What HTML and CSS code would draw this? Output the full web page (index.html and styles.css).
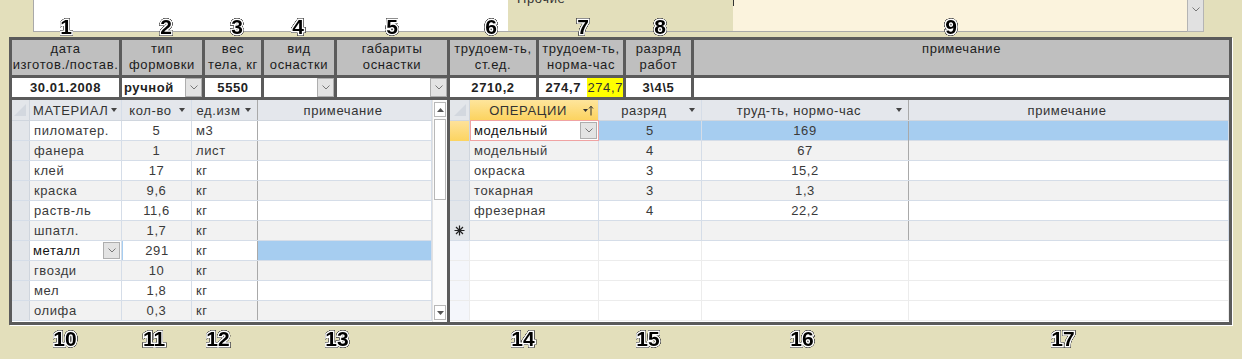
FILE: index.html
```html
<!DOCTYPE html>
<html lang="ru">
<head>
  <meta charset="UTF-8" />
  <title>Изделие: материалы и операции</title>
  <link rel="stylesheet" href="styles.css">
</head>
<body>

  <!-- Top controls (cut off) -->
  <div class="strip">
    <div class="strip-pad"></div>
    <div class="box-white"></div>
    <div class="box-khaki"><span class="cut-label">Прочие</span></div>
    <div class="box-cream"><span class="caret"></span></div>
    <div class="combo-btn">
      <svg width="8" height="5" viewBox="0 0 8 5"><path d="M0.5 0.5 L4 4 L7.5 0.5" fill="none" stroke="#777"/></svg>
    </div>
  </div>

  <div class="frame">

    <!-- Product header -->
    <div class="head-table">
      <div class="hcell">дата<br>изготов./постав.</div>
      <div class="hcell">тип<br>формовки</div>
      <div class="hcell">вес<br>тела, кг</div>
      <div class="hcell">вид<br>оснастки</div>
      <div class="hcell">габариты<br>оснастки</div>
      <div class="hcell">трудоем-ть,<br>ст.ед.</div>
      <div class="hcell">трудоем-ть,<br>норма-час</div>
      <div class="hcell">разряд<br>работ</div>
      <div class="hcell">примечание</div>

      <div class="dcell">30.01.2008</div>
      <div class="dcell combo">
        <span class="combo-text">ручной</span>
        <span class="drop tall"><svg width="8" height="5" viewBox="0 0 8 5"><path d="M0.5 0.5 L4 4 L7.5 0.5" fill="none" stroke="#777"/></svg></span>
      </div>
      <div class="dcell">5550</div>
      <div class="dcell combo">
        <span class="combo-text"></span>
        <span class="drop tall"><svg width="8" height="5" viewBox="0 0 8 5"><path d="M0.5 0.5 L4 4 L7.5 0.5" fill="none" stroke="#777"/></svg></span>
      </div>
      <div class="dcell combo">
        <span class="combo-text"></span>
        <span class="drop tall"><svg width="8" height="5" viewBox="0 0 8 5"><path d="M0.5 0.5 L4 4 L7.5 0.5" fill="none" stroke="#777"/></svg></span>
      </div>
      <div class="dcell">2710,2</div>
      <div class="dcell split">
        <span class="split-main">274,7</span>
        <span class="split-mark">274,7</span>
      </div>
      <div class="dcell">3\4\5</div>
      <div class="dcell"></div>
    </div>

    <!-- Subforms -->
    <div class="subforms">

      <!-- Materials -->
      <div class="sub mat">
        <div class="rows">
          <div class="row head">
            <div class="c sel corner"><svg width="14" height="14" viewBox="0 0 14 14"><polygon points="1,13 13,1 13,13" fill="#d3d8df"/></svg></div>
            <div class="c hc"><span class="ht">МАТЕРИАЛ</span><i class="arr"></i></div>
            <div class="c hc"><span class="ht">кол-во</span><i class="arr"></i></div>
            <div class="c hc sep"><span class="ht">ед.изм</span><i class="arr"></i></div>
            <div class="c hc"><span class="ht">примечание</span></div>
          </div>
          <div class="row">
            <div class="c sel"></div><div class="c">пиломатер.</div><div class="c mid">5</div><div class="c sep">м3</div><div class="c"></div>
          </div>
          <div class="row alt">
            <div class="c sel"></div><div class="c">фанера</div><div class="c mid">1</div><div class="c sep">лист</div><div class="c"></div>
          </div>
          <div class="row">
            <div class="c sel"></div><div class="c">клей</div><div class="c mid">17</div><div class="c sep">кг</div><div class="c"></div>
          </div>
          <div class="row alt">
            <div class="c sel"></div><div class="c">краска</div><div class="c mid">9,6</div><div class="c sep">кг</div><div class="c"></div>
          </div>
          <div class="row">
            <div class="c sel"></div><div class="c">раств-ль</div><div class="c mid">11,6</div><div class="c sep">кг</div><div class="c"></div>
          </div>
          <div class="row alt">
            <div class="c sel"></div><div class="c">шпатл.</div><div class="c mid">1,7</div><div class="c sep">кг</div><div class="c"></div>
          </div>
          <div class="row current">
            <div class="c sel"></div>
            <div class="c combo-cell">
              <span class="combo-text dark">металл</span>
              <span class="drop"><svg width="8" height="5" viewBox="0 0 8 5"><path d="M0.5 0.5 L4 4 L7.5 0.5" fill="none" stroke="#777"/></svg></span>
            </div>
            <div class="c mid edge">291</div><div class="c sep">кг</div><div class="c picked"></div>
          </div>
          <div class="row alt">
            <div class="c sel"></div><div class="c">гвозди</div><div class="c mid">10</div><div class="c sep">кг</div><div class="c"></div>
          </div>
          <div class="row">
            <div class="c sel"></div><div class="c">мел</div><div class="c mid">1,8</div><div class="c sep">кг</div><div class="c"></div>
          </div>
          <div class="row alt">
            <div class="c sel"></div><div class="c">олифа</div><div class="c mid">0,3</div><div class="c sep">кг</div><div class="c"></div>
          </div>
        </div>

        <div class="scroll">
          <div class="sb-btn"><svg width="7" height="4" viewBox="0 0 7 4"><polygon points="0,4 3.5,0 7,4" fill="#555"/></svg></div>
          <div class="sb-thumb"></div>
          <div class="sb-space"></div>
          <div class="sb-btn"><svg width="7" height="4" viewBox="0 0 7 4"><polygon points="0,0 3.5,4 7,0" fill="#555"/></svg></div>
        </div>
      </div>

      <!-- Operations -->
      <div class="sub ops">
        <div class="row head">
          <div class="c sel corner"><svg width="14" height="14" viewBox="0 0 14 14"><polygon points="1,13 13,1 13,13" fill="#d3d8df"/></svg></div>
          <div class="c hc active">
            <span class="ht">ОПЕРАЦИИ</span>
            <svg class="sort" width="11" height="11" viewBox="0 0 11 11">
              <polygon points="0,4 5,4 2.5,7" fill="#333"/>
              <path d="M8 10.5 V1.5 M6 3.5 L8 1.2 L10 3.5" fill="none" stroke="#333" stroke-width="1"/>
            </svg>
          </div>
          <div class="c hc"><span class="ht">разряд</span><i class="arr"></i></div>
          <div class="c hc sep"><span class="ht">труд-ть, нормо-час</span><i class="arr"></i></div>
          <div class="c hc"><span class="ht">примечание</span></div>
        </div>
        <div class="row selected">
          <div class="c sel mark"></div>
          <div class="c combo-cell editing">
            <span class="combo-text dark">модельный</span>
            <span class="drop"><svg width="8" height="5" viewBox="0 0 8 5"><path d="M0.5 0.5 L4 4 L7.5 0.5" fill="none" stroke="#777"/></svg></span>
          </div>
          <div class="c mid">5</div><div class="c mid sep">169</div><div class="c"></div>
        </div>
        <div class="row alt">
          <div class="c sel"></div><div class="c">модельный</div><div class="c mid">4</div><div class="c mid sep">67</div><div class="c"></div>
        </div>
        <div class="row">
          <div class="c sel"></div><div class="c">окраска</div><div class="c mid">3</div><div class="c mid sep">15,2</div><div class="c"></div>
        </div>
        <div class="row alt">
          <div class="c sel"></div><div class="c">токарная</div><div class="c mid">3</div><div class="c mid sep">1,3</div><div class="c"></div>
        </div>
        <div class="row">
          <div class="c sel"></div><div class="c">фрезерная</div><div class="c mid">4</div><div class="c mid sep">22,2</div><div class="c"></div>
        </div>
        <div class="row alt">
          <div class="c sel new">
            <svg width="11" height="11" viewBox="0 0 11 11">
              <path d="M5.5 0.5 V10.5 M0.5 5.5 H10.5 M2 2 L9 9 M9 2 L2 9" stroke="#222" stroke-width="1.2"/>
            </svg>
          </div>
          <div class="c"></div><div class="c"></div><div class="c sep"></div><div class="c"></div>
        </div>
        <div class="row empty"><div class="c sel"></div><div class="c"></div><div class="c"></div><div class="c sep"></div><div class="c"></div></div>
        <div class="row empty"><div class="c sel"></div><div class="c"></div><div class="c"></div><div class="c sep"></div><div class="c"></div></div>
        <div class="row empty"><div class="c sel"></div><div class="c"></div><div class="c"></div><div class="c sep"></div><div class="c"></div></div>
        <div class="row empty"><div class="c sel"></div><div class="c"></div><div class="c"></div><div class="c sep"></div><div class="c"></div></div>
      </div>

    </div>
  </div>

  <!-- Callout numbers -->
  <div class="num top n1">1</div>
  <div class="num top n2">2</div>
  <div class="num top n3">3</div>
  <div class="num top n4">4</div>
  <div class="num top n5">5</div>
  <div class="num top n6">6</div>
  <div class="num top n7">7</div>
  <div class="num top n8">8</div>
  <div class="num top n9">9</div>
  <div class="num bottom n10">10</div>
  <div class="num bottom n11">11</div>
  <div class="num bottom n12">12</div>
  <div class="num bottom n13">13</div>
  <div class="num bottom n14">14</div>
  <div class="num bottom n15">15</div>
  <div class="num bottom n16">16</div>
  <div class="num bottom n17">17</div>

</body>
</html>
```

FILE: styles.css
```css
/* Base */
* {
  margin: 0;
  padding: 0;
  box-sizing: border-box;
}

body {
  position: relative;
  width: 1242px;
  height: 359px;
  overflow: hidden;
  background: #e3dfbb;
  font-family: "Liberation Sans", Arial, sans-serif;
  font-size: 13px;
  letter-spacing: 0.6px;
  color: #222;
}

/* Top strip (controls cut off above) */
.strip {
  display: flex;
  height: 32px;
}

.strip-pad {
  width: 33px;
}

.box-white {
  width: 475px;
  background: #fff;
  border-left: 1px solid #a9a9a9;
  border-bottom: 1px solid #a9a9a9;
}

.box-khaki {
  width: 225px;
  border-bottom: 1px solid #a9a9a9;
  overflow: hidden;
  padding-left: 9px;
}

.cut-label {
  display: block;
  margin-top: -8px;
  line-height: 14px;
  color: #333;
}

.box-cream {
  width: 454px;
  background: #fbf3dd;
  border-bottom: 1px solid #a9a9a9;
}

.caret {
  display: block;
  width: 1px;
  height: 6px;
  background: #333;
}

.combo-btn {
  width: 17px;
  background: #e1e1e1;
  border: 1px solid #b4b4b4;
  border-top: none;
  display: flex;
  justify-content: center;
  padding-top: 7px;
}

/* Main frame */
.frame {
  margin: 5px 0 0 9px;
  width: 1223px;
  border: 3px solid #5b5b5b;
  background: #5b5b5b;
  display: flex;
  flex-direction: column;
  gap: 3px;
  box-shadow: 1px 1px 0 #fff;
}

.head-table {
  display: grid;
  grid-template-columns: 107px 80px 56px 70px 110px 86px 84px 65px 535px;
  grid-template-rows: 35px 19px;
  gap: 3px;
}

.hcell {
  background: #bfbfbf;
  text-align: center;
  line-height: 16px;
  padding-top: 1px;
  color: #1c1c1c;
  white-space: nowrap;
}

.dcell {
  background: #fff;
  font-weight: bold;
  text-align: center;
  line-height: 19px;
  color: #222;
}

.dcell.combo {
  display: flex;
  text-align: left;
}

.combo-text {
  flex: 1;
  padding-left: 2px;
}

.split {
  display: flex;
}

.split-main {
  width: 51px;
}

.split-mark {
  flex: 1;
  background: #ffff00;
  font-weight: normal;
  color: #333;
}

/* Dropdown button */
.drop {
  width: 17px;
  height: 17px;
  background: #e3e3e3;
  border: 1px solid #aeaeae;
  display: flex;
  align-items: center;
  justify-content: center;
}

.drop.tall {
  height: 19px;
}

/* Subforms */
.subforms {
  display: flex;
  gap: 3px;
  height: 222px;
}

.sub {
  background: #fff;
  color: #3a3a3a;
}

.mat {
  width: 435px;
  display: flex;
}

.mat .rows {
  width: 420px;
}

.ops {
  width: 779px;
}

/* Datasheet rows */
.row {
  display: grid;
  height: 20px;
  border-bottom: 1px solid #d5dde8;
}

.mat .row {
  grid-template-columns: 18px 92px 70px 66px 174px;
}

.ops .row {
  grid-template-columns: 20px 129px 103px 207px 320px;
}

.row.alt {
  background: #f2f2f2;
}

.row.head {
  height: 21px;
  background: #e4e7ec;
  border-bottom-color: #d0d6de;
}

.c {
  border-right: 1px solid #d5dde8;
  line-height: 19px;
  padding: 0 4px;
  overflow: hidden;
  white-space: nowrap;
}

.c.mid {
  text-align: center;
}

.c.sep {
  border-right-color: #a9a9a9;
}

.sel {
  background: #e3e6ea;
  border-right-color: #cfd5dd;
  padding: 0;
}

.corner {
  display: flex;
  align-items: flex-end;
  justify-content: flex-end;
  padding: 0 2px 3px 0;
}

.hc {
  display: flex;
  align-items: center;
  padding: 0 6px 0 3px;
  color: #333;
}

.hc .ht {
  flex: 1;
  text-align: center;
}

.hc.active {
  background: linear-gradient(#fee59c, #fcd35f);
  padding-right: 4px;
}

.arr {
  width: 0;
  height: 0;
  margin-left: 3px;
  border-left: 3.5px solid transparent;
  border-right: 3.5px solid transparent;
  border-top: 4px solid #444;
}

.combo-cell {
  display: flex;
  align-items: center;
  padding: 0 1px 0 0;
  background: #fff;
}

.combo-text.dark {
  color: #111;
  padding-left: 3px;
}

.edge {
  background: #fff;
  border-left: 1px solid #a6cdf0;
}

.picked {
  background: #a6cdf0;
}

.row.selected {
  background: #a6cdf0;
}

.combo-cell.editing {
  border: 1px solid #f0a3a3;
  height: 21px;
  margin-top: -1px;
}

.sel.mark {
  background: linear-gradient(#fee29a, #fcd460);
}

.sel.new {
  display: flex;
  align-items: center;
  justify-content: center;
}

.row.empty {
  background: #fff;
  border-bottom-color: #ececec;
}

.row.empty .c {
  border-right-color: #ececec;
}

.row.empty .sel {
  background: #f4f6fb;
}

/* Scrollbar */
.scroll {
  width: 15px;
  display: flex;
  flex-direction: column;
  padding: 2px 1px 2px 1px;
  background: #fbfbfb;
  border-left: 1px solid #e2e2e2;
}

.sb-btn {
  height: 15px;
  background: #fff;
  border: 1px solid #b8b8b8;
  display: flex;
  align-items: center;
  justify-content: center;
}

.sb-thumb {
  height: 81px;
  margin-top: 2px;
  background: #fff;
  border: 1px solid #b8b8b8;
}

.sb-space {
  flex: 1;
}

/* Callout numbers */
.num {
  position: absolute;
  transform: translate(-50%, -50%);
  font-family: "Liberation Sans", Arial, sans-serif;
  font-weight: bold;
  font-size: 21px;
  line-height: 1;
  letter-spacing: 0;
  color: #000;
  -webkit-text-stroke: 3px #fff;
  paint-order: stroke fill;
  filter: drop-shadow(0 0 0.6px #000) drop-shadow(0 0 0.6px #000) drop-shadow(0 0 0.5px #000);
}

.num.top { top: 26px; }
.num.bottom { top: 338px; }

.n1 { left: 66px; }
.n2 { left: 166px; }
.n3 { left: 237px; }
.n4 { left: 298px; }
.n5 { left: 392px; }
.n6 { left: 491px; }
.n7 { left: 583px; }
.n8 { left: 660px; }
.n9 { left: 951px; }
.n10 { left: 65px; }
.n11 { left: 154px; }
.n12 { left: 218px; }
.n13 { left: 337px; }
.n14 { left: 523px; }
.n15 { left: 648px; }
.n16 { left: 802px; }
.n17 { left: 1063px; }
```
